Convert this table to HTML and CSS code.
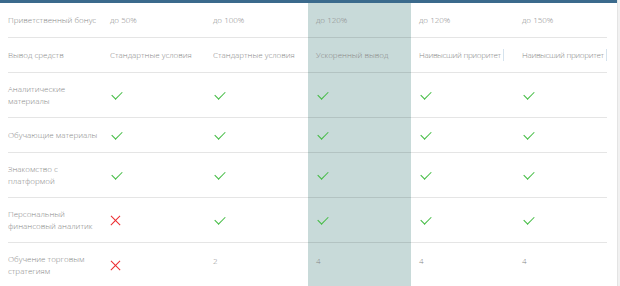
FILE: index.html
```html
<!DOCTYPE html>
<html lang="ru">
<head>
  <meta charset="UTF-8" />
  <title>Сравнение счетов</title>
  <link rel="stylesheet" href="styles.css">
</head>
<body>
  <div class="page">
    <div class="topbar"></div>
    <div class="table">
      <div class="row r-short">
        <div class="label">Приветственный бонус</div>
        <div class="cell">до 50%</div>
        <div class="cell">до 100%</div>
        <div class="cell">до 120%</div>
        <div class="cell">до 120%</div>
        <div class="cell">до 150%</div>
      </div>
      <div class="row r-mid">
        <div class="label">Вывод средств</div>
        <div class="cell">Стандартные условия</div>
        <div class="cell">Стандартные условия</div>
        <div class="cell">Ускоренный вывод</div>
        <div class="cell"><span class="clip">Наивысший приоритет</span></div>
        <div class="cell"><span class="clip">Наивысший приоритет</span></div>
      </div>
      <div class="row">
        <div class="label">Аналитические<br>материалы</div>
        <div class="cell"><span class="yes"></span></div>
        <div class="cell"><span class="yes"></span></div>
        <div class="cell"><span class="yes"></span></div>
        <div class="cell"><span class="yes"></span></div>
        <div class="cell"><span class="yes"></span></div>
      </div>
      <div class="row r-mid">
        <div class="label">Обучающие материалы</div>
        <div class="cell"><span class="yes"></span></div>
        <div class="cell"><span class="yes"></span></div>
        <div class="cell"><span class="yes"></span></div>
        <div class="cell"><span class="yes"></span></div>
        <div class="cell"><span class="yes"></span></div>
      </div>
      <div class="row">
        <div class="label">Знакомство с<br>платформой</div>
        <div class="cell"><span class="yes"></span></div>
        <div class="cell"><span class="yes"></span></div>
        <div class="cell"><span class="yes"></span></div>
        <div class="cell"><span class="yes"></span></div>
        <div class="cell"><span class="yes"></span></div>
      </div>
      <div class="row">
        <div class="label">Персональный<br>финансовый аналитик</div>
        <div class="cell"><span class="no"></span></div>
        <div class="cell"><span class="yes"></span></div>
        <div class="cell"><span class="yes"></span></div>
        <div class="cell"><span class="yes"></span></div>
        <div class="cell"><span class="yes"></span></div>
      </div>
      <div class="row last">
        <div class="label">Обучение торговым<br>стратегиям</div>
        <div class="cell"><span class="no"></span></div>
        <div class="cell top">2</div>
        <div class="cell top">4</div>
        <div class="cell top">4</div>
        <div class="cell top">4</div>
      </div>
    </div>
  </div>
  <div class="scroll"></div>
</body>
</html>
```

FILE: styles.css
```css
/* Base */
html, body {
  margin: 0;
  height: 100%;
}
body {
  display: flex;
  background: #fff;
  font-family: 'Open Sans', 'Liberation Sans', sans-serif;
  font-size: 8px;
  font-weight: 300;
  color: #888;
  overflow: hidden;
}
.page {
  width: 617px;
}
.topbar {
  height: 3px;
  background-color: #3b6a8c;
}
.scroll {
  width: 3px;
  background-color: #f1f1f1;
  border-left: 1px solid #e4e4e4;
}

/* Table with highlighted 3rd plan */
.table {
  height: 283px;
  background: linear-gradient(to right,
    transparent 308px, #c8dad9 308px, #c8dad9 411px, transparent 411px);
}
.row {
  display: grid;
  grid-template-columns: 94px repeat(4, 103px) 93px;
  height: 44px;
  margin: 0 10px 0 8px;
  border-bottom: 1px solid rgba(0, 0, 0, 0.1);
}
.row.r-short { height: 34px; }
.row.r-mid { height: 34px; }
.row.last { border-bottom: 0; }

.label, .cell {
  display: flex;
  align-items: center;
  line-height: 12px;
  white-space: nowrap;
}
.cell {
  padding-left: 8px;
  min-width: 0;
}
.cell.top {
  align-items: flex-start;
  padding-top: 12px;
}
/* long value, squeezed to fit the cell */
.clip {
  display: block;
  letter-spacing: -0.3px;
  padding-right: 2px;
  border-right: 1px solid #d5e3ee;
}

/* Icons */
.yes {
  display: block;
  width: 9px;
  height: 5px;
  margin: 0 0 3px 2px;
  border-left: 1.3px solid #40bb40;
  border-bottom: 1.3px solid #40bb40;
  transform: rotate(-45deg);
}
.no {
  display: block;
  position: relative;
  width: 11px;
  height: 11px;
}
.no::before, .no::after {
  content: "";
  position: absolute;
  left: -1px;
  top: 5px;
  width: 13px;
  height: 1.2px;
  background-color: #ec2a2e;
  transform: rotate(45deg);
}
.no::after {
  transform: rotate(-45deg);
}
```
